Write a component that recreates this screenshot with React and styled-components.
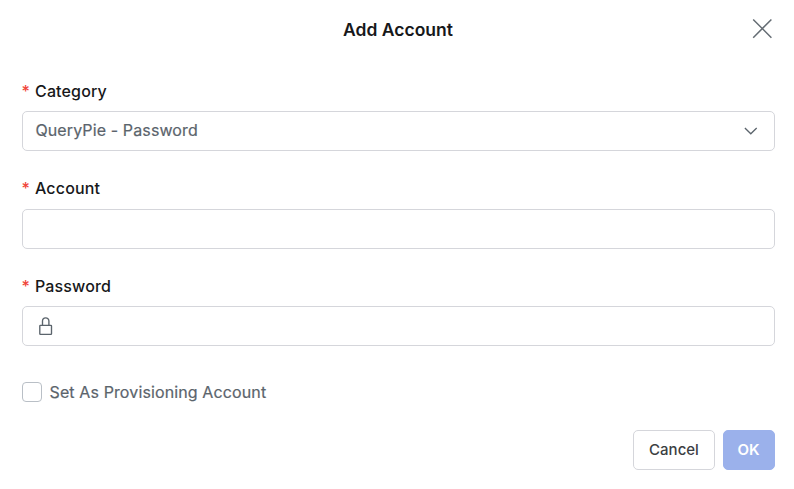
import React from "react";
import styled, { createGlobalStyle } from "styled-components";

const GlobalStyle = createGlobalStyle`
  * { box-sizing: border-box; }
  body { margin: 0; background: #fff; font-family: Inter, "Liberation Sans", sans-serif; }
`;

const Dialog = styled.form`
  display: flex;
  flex-direction: column;
  width: 794px;
  height: 489px;
  padding: 0 19px 0 22px;
  background: #fff;
`;

const Header = styled.header`
  display: grid;
  grid-template-columns: 24px 1fr 24px;
  align-items: center;
  height: 58px;
`;

const Title = styled.h1`
  grid-column: 2;
  margin: 1px 0 0 -1px;
  font-size: 17.5px;
  font-weight: 600;
  line-height: 24px;
  text-align: center;
  color: #17181a;
`;

const CloseButton = styled.button`
  display: flex;
  padding: 0;
  border: 0;
  background: none;
  color: #646c73;
`;

const Fields = styled.div`
  padding-top: 21px;
`;

const Field = styled.div`
  display: flex;
  flex-direction: column;
  height: 97.4px;
`;

const Label = styled.label`
  display: flex;
  gap: 6px;
  height: 32.2px;
  font-size: 16px;
  font-weight: 500;
  letter-spacing: 0.15px;
  line-height: 24px;
  color: #17181a;
`;

const Required = styled.span`
  width: 7px;
  margin-left: -0.5px;
  margin-right: 0.5px;
  color: #f04438;
`;

const Control = styled.div`
  display: flex;
  align-items: center;
  justify-content: space-between;
  width: 753px;
  height: 40px;
  padding: 0 16px 0 13px;
  border: 1px solid #d5d6db;
  border-radius: 5px;
  color: #5b646c;
`;

const Value = styled.span`
  margin: -2px 0 0 -0.6px;
  font-size: 16px;
  letter-spacing: 0.12px;
  -webkit-text-stroke: 0.2px currentColor;
`;

const CheckRow = styled.label`
  display: flex;
  align-items: center;
  gap: 7.5px;
  height: 20px;
  margin-top: 10.8px;
  font-size: 16px;
  letter-spacing: 0.12px;
  color: #5b646c;
  -webkit-text-stroke: 0.2px currentColor;
`;

const Box = styled.span`
  width: 20px;
  height: 20px;
  border: 1px solid #b9bfc6;
  border-radius: 4px;
`;

const Footer = styled.footer`
  display: flex;
  justify-content: flex-end;
  gap: 8px;
  margin-top: 28px;
`;

const Button = styled.button`
  width: ${(p) => (p.$primary ? 52 : 82)}px;
  height: 40px;
  padding: ${(p) => (p.$primary ? "0 1px 0 0" : "0")};
  border: 1px solid ${(p) => (p.$primary ? "#9bb1eb" : "#d5d6db")};
  border-radius: 5px;
  background: ${(p) => (p.$primary ? "#9bb1eb" : "#fff")};
  color: ${(p) => (p.$primary ? "#fff" : "#3b3e42")};
  font: ${(p) => (p.$primary ? 600 : 500)} 15px/24px Inter, sans-serif;
`;

const LabelText = ({ children }) => (
  <Label><Required>*</Required>{children}</Label>
);

export default function App() {
  return (
    <>
      <GlobalStyle />
      <Dialog>
        <Header>
          <Title>Add Account</Title>
          <CloseButton type="button" aria-label="Close">
            <svg width="24" height="24" viewBox="0 0 24 24" fill="none" stroke="currentColor" strokeWidth="1.5">
              <path d="M2.2 2.5L20.4 20.7M20.4 2.5L2.2 20.7" />
            </svg>
          </CloseButton>
        </Header>
        <Fields>
          <Field>
            <LabelText>Category</LabelText>
            <Control>
              <Value>QueryPie - Password</Value>
              <svg width="14" height="8" viewBox="0 0 14 8" fill="none" stroke="currentColor" strokeWidth="1.3">
                <path d="M0.9 1L6.8 6.8L12.7 1" />
              </svg>
            </Control>
          </Field>
          <Field>
            <LabelText>Account</LabelText>
            <Control />
          </Field>
          <Field>
            <LabelText>Password</LabelText>
            <Control>
              <svg width="20" height="20" viewBox="0 0 20 20" fill="none" stroke="currentColor" strokeWidth="1.35">
                <rect x="3.8" y="9.4" width="11.7" height="9" rx="0.6" />
                <path d="M6.5 9.4V5.1A3.2 3.2 0 0 1 12.9 5.1V9.4" />
              </svg>
            </Control>
          </Field>
        </Fields>
        <CheckRow><Box />Set As Provisioning Account</CheckRow>
        <Footer>
          <Button type="button">Cancel</Button>
          <Button type="button" $primary>OK</Button>
        </Footer>
      </Dialog>
    </>
  );
}
